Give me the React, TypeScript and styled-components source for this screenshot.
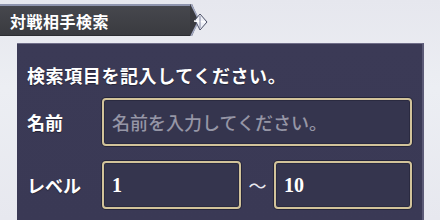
import styled, { createGlobalStyle } from "styled-components";

const GlobalStyle = createGlobalStyle`
  html, body {
    margin: 0;
    padding: 0;
    background: linear-gradient(180deg, #e6e7ee 0%, #eceef3 40%, #e7e8ef 100%);
    font-family: "Noto Sans CJK JP", "Noto Sans", sans-serif;
    overflow: hidden;
  }
`;

const Screen = styled.div`
  width: 440px;
  height: 220px;
  padding-top: 4px;
  box-sizing: border-box;
`;

const Header = styled.div`
  display: flex;
  align-items: stretch;
  height: 32px;
`;

const HeaderBar = styled.div`
  width: 190px;
  box-sizing: border-box;
  padding-left: 10px;
  display: flex;
  align-items: center;
  background: linear-gradient(180deg, #46474d 0%, #3a3b40 100%);
  border-top: 2px solid #8e94ad;
  border-bottom: 1px solid #2c2d32;
  color: #ffffff;
  font-size: 16px;
  font-weight: 700;
  letter-spacing: 0.5px;
`;

const Panel = styled.div`
  margin: 7px 0 0 17px;
  width: 407px;
  height: 180px;
  box-sizing: border-box;
  padding: 18px 10px 0 10px;
  background: linear-gradient(180deg, #3b3a56 0%, #3a3955 100%);
  border-top: 1px solid #6f6d88;
  border-right: 2px solid #5a5975;
`;

const Title = styled.div`
  color: #ffffff;
  font-size: 18px;
  font-weight: 700;
  line-height: 26px;
  letter-spacing: 0.6px;
  text-shadow: 0 1px 1px rgba(0, 0, 0, 0.4);
`;

const Row = styled.div<{ $top: number }>`
  display: flex;
  align-items: center;
  margin-top: ${(p) => p.$top}px;
`;

const Label = styled.div`
  width: 75px;
  flex: none;
  color: #ffffff;
  font-size: 18px;
  font-weight: 700;
  text-shadow: 0 1px 1px rgba(0, 0, 0, 0.4);
`;

const Field = styled.div<{ $width: number }>`
  width: ${(p) => p.$width}px;
  height: 48px;
  box-sizing: border-box;
  display: flex;
  align-items: center;
  padding-left: 8px;
  background: #35354e;
  border: 2px solid #d2c39a;
  border-radius: 4px;
  box-shadow: 0 0 0 1px #25253a, inset 0 0 0 1px #2a2a40;
  font-size: 18px;
`;

const Placeholder = styled.span`
  color: #9696a6;
  font-weight: 500;
`;

const Value = styled.span`
  color: #ffffff;
  font-weight: 700;
  font-family: "Liberation Serif", "Noto Sans CJK JP", serif;
  font-size: 20px;
`;

const Tilde = styled.div`
  width: 33px;
  text-align: center;
  color: #e8e8f0;
  font-size: 18px;
`;

function HeaderCap() {
  return (
    <svg width="20" height="32" viewBox="0 0 20 32">
      <polygon points="0,0 2,0 8,14 8,18 2,32 0,32" fill="#3a3b40" />
      <polyline points="1,0 8,14" fill="none" stroke="#a3a9c2" strokeWidth="1.6" />
      <polyline points="8,18 1,32" fill="none" stroke="#a3a9c2" strokeWidth="1.6" />
      <polygon points="5,16 10,10 17,18 10,26" fill="#eef0f7" stroke="#4a4f66" strokeWidth="1" />
      <line x1="4" y1="17" x2="15" y2="18" stroke="#ffffff" strokeWidth="1.4" />
      <line x1="10" y1="12" x2="10" y2="24" stroke="#6a7090" strokeWidth="0.8" />
    </svg>
  );
}

export default function App() {
  return (
    <>
      <GlobalStyle />
      <Screen>
        <Header>
          <HeaderBar>対戦相手検索</HeaderBar>
          <HeaderCap />
        </Header>
        <Panel>
          <Title>検索項目を記入してください。</Title>
          <Row $top={10}>
            <Label>名前</Label>
            <Field $width={312}>
              <Placeholder>名前を入力してください。</Placeholder>
            </Field>
          </Row>
          <Row $top={15}>
            <Label>レベル</Label>
            <Field $width={140}>
              <Value>1</Value>
            </Field>
            <Tilde>〜</Tilde>
            <Field $width={139}>
              <Value>10</Value>
            </Field>
          </Row>
        </Panel>
      </Screen>
    </>
  );
}
